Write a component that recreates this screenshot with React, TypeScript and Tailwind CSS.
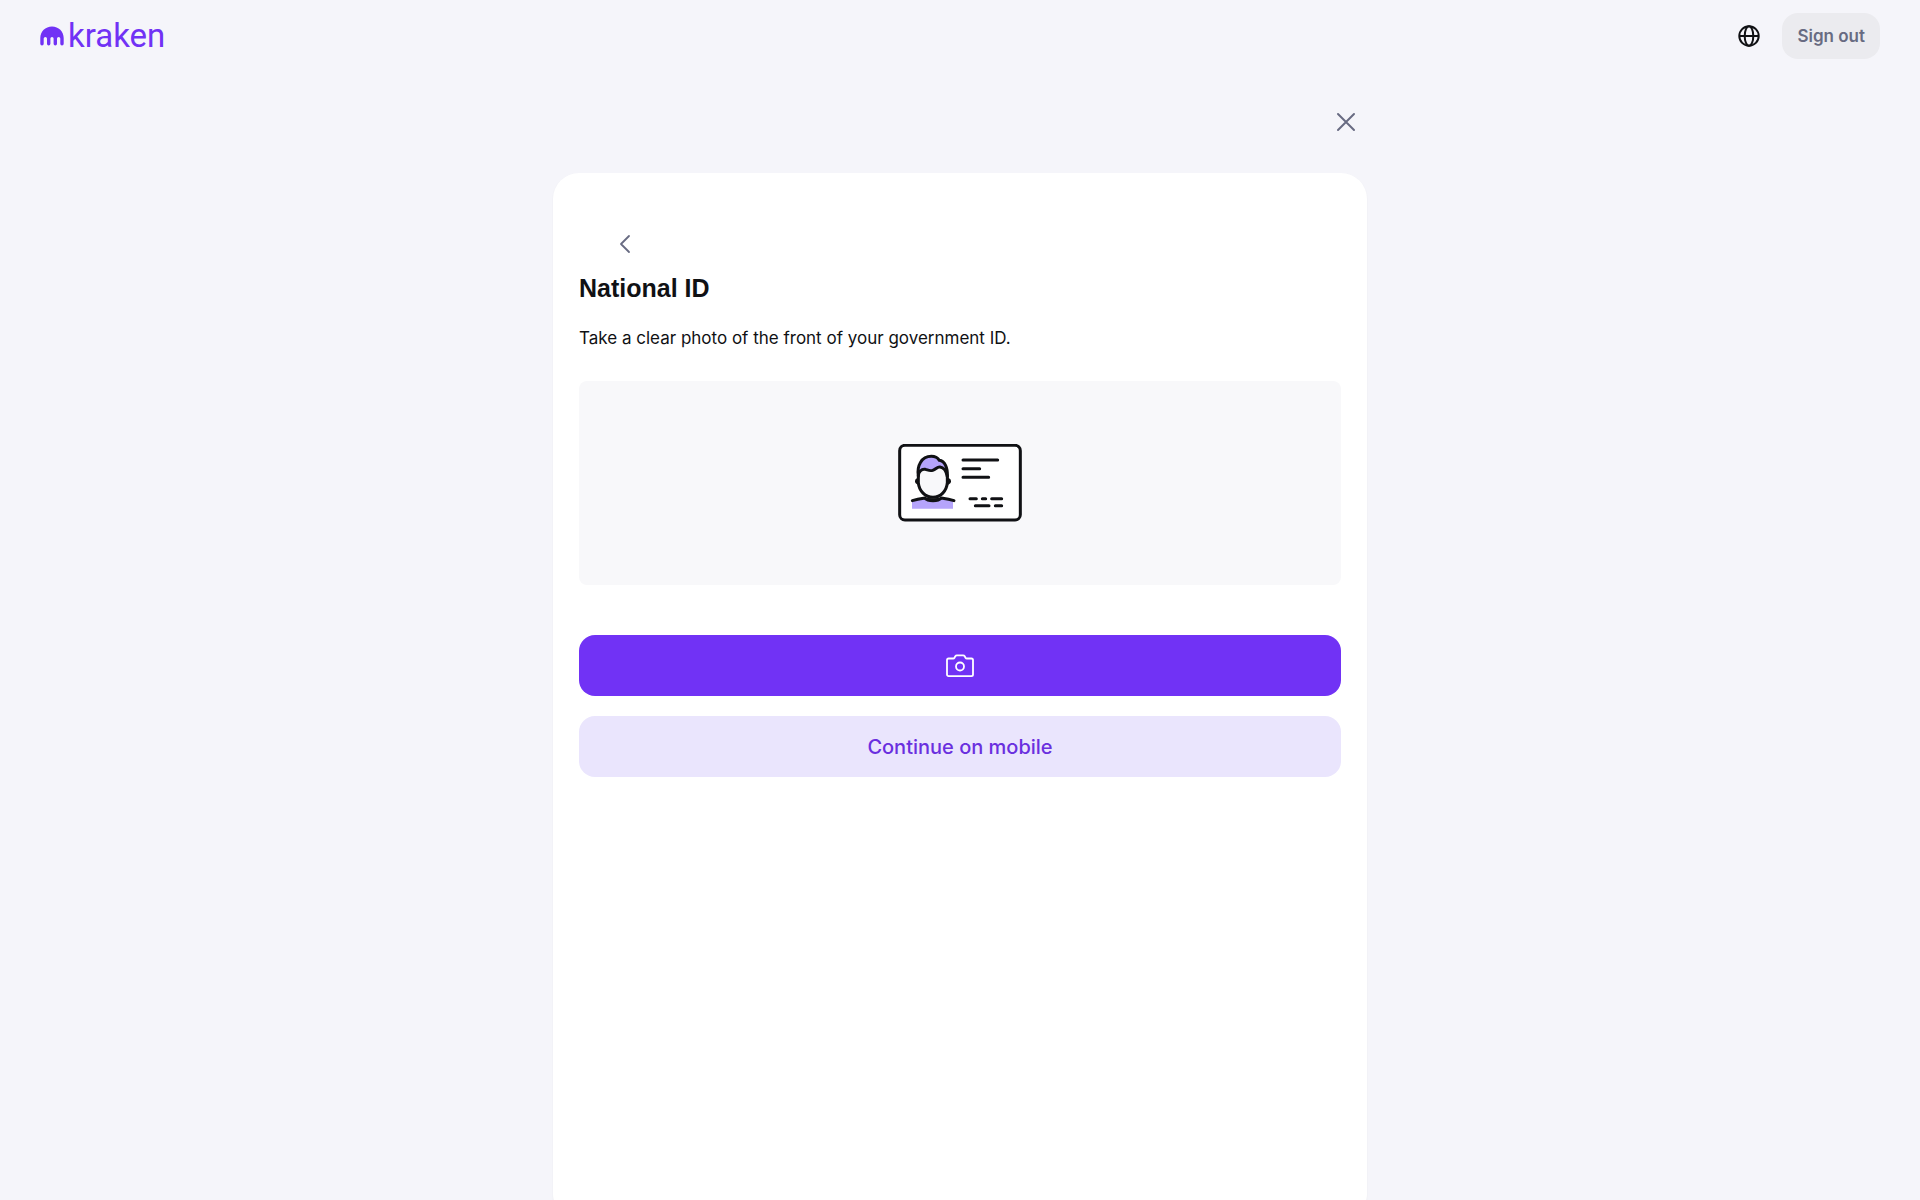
import React from "react";

function KrakenMark() {
  return (
    <svg width="24" height="20" viewBox="0 0 24 20" fill="#7132f5" aria-hidden="true">
      <path d="M12 0.5C5.4 0.5 0.3 5.6 0.3 12V17.8a1.7 1.7 0 0 0 3.4 0V12.6a1.6 1.6 0 0 1 3.3 0V17.8a1.7 1.7 0 0 0 3.4 0V12.6a1.6 1.6 0 0 1 3.2 0V17.8a1.7 1.7 0 0 0 3.4 0V12.6a1.6 1.6 0 0 1 3.3 0V17.8a1.7 1.7 0 0 0 3.4 0V12C23.7 5.6 18.6 0.5 12 0.5Z" />
    </svg>
  );
}

function GlobeIcon() {
  return (
    <svg width="22" height="22" viewBox="0 0 22 22" fill="none" stroke="#101114" strokeWidth="2" aria-hidden="true">
      <circle cx="11" cy="11" r="9.7" />
      <ellipse cx="11" cy="11" rx="4.3" ry="9.7" />
      <path d="M1.3 11H20.7" />
    </svg>
  );
}

function CameraIcon() {
  return (
    <svg width="28" height="24" viewBox="0 0 28 24" fill="none" stroke="#ffffff" strokeWidth="1.8" strokeLinejoin="round" aria-hidden="true">
      <path d="M2.6 4.500H7.200c.6 0 1-.3 1.300-.8l.8-1.400c.4-.7.9-1 1.600-1h6.200c.7 0 1.200.3 1.600 1l.8 1.400c.3.5.7.8 1.300.8h4.600c.9 0 1.600.7 1.600 1.600V20.500c0 .9-.7 1.600-1.600 1.600H2.600C1.700 22.100 1 21.400 1 20.500V6.100C1 5.200 1.700 4.500 2.600 4.500Z" />
      <circle cx="14" cy="12.500" r="4" />
    </svg>
  );
}

function IdCardDrawing() {
  return (
    <svg width="124" height="78" viewBox="39 42 372 234" fill="none" stroke="#101114" strokeLinecap="round" strokeLinejoin="round" role="img" aria-label="Front of a national ID card">
      <rect x="44" y="46" width="362" height="224" rx="16" fill="#ffffff" strokeWidth="9" />
      <path d="M81 212C95 208 108 206 119 203C130 218 158 218 169 203C180 206 192 208 204 212V236H81Z" fill="#b5a4fb" stroke="none" />
      <path d="M103 126C107 120 114 116 121 118C129 120 134 124 143 121C153 118 156 109 165 111C175 113 182 120 184 128C188 137 189 150 188 160C186 184 167 202 144 202C121 202 103 184 101 160Z" fill="#f8f8fa" stroke="none" />
      <path d="M100 138C95 108 109 79 139 79C150 79 158 83 163 91C179 93 189 113 187 140C184 124 175 112 165 111C156 110 153 118 143 121C134 124 129 120 121 118C109 116 100 127 100 138Z" fill="#b5a4fb" strokeWidth="9" />
      <path d="M100 136V158C102 183 121 202 144 202C167 202 185 183 187 158V136" strokeWidth="9" />
      <path d="M98 147C91 149 91 158 98 161ZM190 147C197 149 197 158 190 161Z" fill="#101114" strokeWidth="6" />
      <path d="M82 212C95 208 107 206 120 204M169 204C182 206 194 208 207 212" strokeWidth="9" />
      <path d="M117 204C129 217 159 217 171 204C155 209 134 209 117 204Z" fill="#101114" strokeWidth="6" />
      <path d="M234 90H338M234 116H284M234 142H311" strokeWidth="9" />
      <path d="M255 206H274M292 206H302M320 206H350M271 227H312M331 227H350" strokeWidth="9" />
    </svg>
  );
}

export default function App() {
  return (
    <div className="flex min-h-screen flex-col overflow-hidden bg-[#f5f5fa] font-['Inter',sans-serif] text-[#101114]">
      <header className="flex items-center justify-between px-10 pt-[13px] pb-3">
        <a href="#" aria-label="kraken" className="flex items-center text-[#7132f5]">
          <KrakenMark />
          <span className="pl-1 font-['Roboto',sans-serif] text-[33px] leading-10">kraken</span>
        </a>
        <div className="flex items-center gap-5">
          <button type="button" aria-label="Language" className="p-0.5">
            <GlobeIcon />
          </button>
          <button type="button" className="rounded-2xl bg-[#ebebef] px-[15px] py-[11px] text-[17px] leading-6 font-semibold text-[#686b82]">
            Sign out
          </button>
        </div>
      </header>

      <main className="mx-auto flex w-full max-w-[814px] flex-1 flex-col">
        <div className="flex justify-end px-[7px] pt-[37px] pb-[37px]">
          <button type="button" aria-label="Close" className="p-1">
            <svg width="20" height="20" viewBox="0 0 20 20" fill="none" stroke="#686b82" strokeWidth="2" strokeLinecap="round" aria-hidden="true">
              <path d="M2 2L18 18M18 2L2 18" />
            </svg>
          </button>
        </div>

        <section className="-mb-5 flex flex-1 flex-col rounded-[26px] bg-white px-[26px] pt-[57px] shadow-xs">
          <button type="button" aria-label="Back" className="ml-8 flex h-7 w-7 items-center justify-center">
            <svg width="12" height="20" viewBox="0 0 12 20" fill="none" stroke="#686b82" strokeWidth="1.8" strokeLinecap="round" strokeLinejoin="round" aria-hidden="true">
              <path d="M10 2L2 10L10 18" />
            </svg>
          </button>
          <h1 className="mt-[14px] font-['Liberation_Sans',sans-serif] text-[25px] leading-8 font-bold">National ID</h1>
          <p className="mt-5 text-[17px] leading-7">
            Take a clear photo of the front of your government ID.
          </p>
          <div className="mt-[29px] flex items-center justify-center rounded-lg bg-[#f8f8fa] py-[63px]">
            <IdCardDrawing />
          </div>
          <button type="button" aria-label="Take photo" className="mt-[50px] flex h-[61px] items-center justify-center rounded-2xl bg-[#7132f5]">
            <CameraIcon />
          </button>
          <button type="button" className="mt-5 h-[61px] rounded-2xl bg-[#eae5fd] text-xl font-medium text-[#6a2fdf]">
            Continue on mobile
          </button>
        </section>
      </main>
    </div>
  );
}
